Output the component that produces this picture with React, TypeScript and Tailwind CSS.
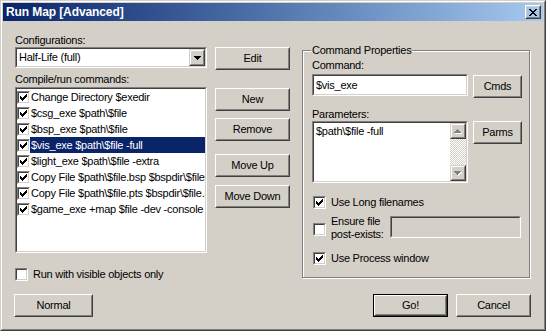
import type { ReactNode } from "react"

const FONT = "font-['Liberation_Sans',Arial,sans-serif]"

function Raised({ children, className = "", isDefault = false }: { children?: ReactNode; className?: string; isDefault?: boolean }) {
  const face = (
    <div className="flex h-full w-full border border-t-white border-l-white border-r-[#404040] border-b-[#404040]">
      <div className="flex flex-1 items-center justify-center border border-t-[#d4d0c8] border-l-[#d4d0c8] border-r-[#808080] border-b-[#808080]">
        {children}
      </div>
    </div>
  )
  if (isDefault) return <div className={`border border-black ${className}`}>{face}</div>
  return <div className={className}>{face}</div>
}

// scrollbar / combo arrow style button
function ArrowBox({ children, className = "" }: { children?: ReactNode; className?: string }) {
  return (
    <div className={`flex border border-t-[#d4d0c8] border-l-[#d4d0c8] border-r-[#404040] border-b-[#404040] ${className}`}>
      <div className="flex flex-1 items-center justify-center border border-t-white border-l-white border-r-[#808080] border-b-[#808080] bg-[#d4d0c8]">
        {children}
      </div>
    </div>
  )
}

function Sunken({ children, className = "", bg = "bg-white" }: { children?: ReactNode; className?: string; bg?: string }) {
  return (
    <div className={`flex border border-t-[#808080] border-l-[#808080] border-r-white border-b-white ${className}`}>
      <div className={`flex flex-1 min-w-0 border border-t-[#404040] border-l-[#404040] border-r-[#d4d0c8] border-b-[#d4d0c8] ${bg}`}>
        {children}
      </div>
    </div>
  )
}

function Check() {
  return (
    <svg width="7" height="7" viewBox="0 0 7 7" shapeRendering="crispEdges" className="m-[1px]">
      <path
        d="M6 0h1v1h-1z M5 1h2v1h-2z M0 2h1v1h-1z M4 2h3v1h-3z M0 3h2v1h-2z M3 3h3v1h-3z M0 4h5v1h-5z M1 5h3v1h-3z M2 6h1v1h-1z"
        fill="#000"
      />
    </svg>
  )
}

function CheckBox({ checked, className = "" }: { checked?: boolean; className?: string }) {
  return (
    <Sunken className={`h-[13px] w-[13px] shrink-0 ${className}`}>
      {checked && <Check />}
    </Sunken>
  )
}

function DownTri({ color = "#000" }: { color?: string }) {
  return (
    <svg width="7" height="4" viewBox="0 0 7 4" shapeRendering="crispEdges">
      <path d="M0 0h7v1h-7z M1 1h5v1h-5z M2 2h3v1h-3z M3 3h1v1h-1z" fill={color} />
    </svg>
  )
}

function GrayTri({ up }: { up?: boolean }) {
  const d = up
    ? "M3 0h1v1h-1z M2 1h3v1h-3z M1 2h5v1h-5z M0 3h7v1h-7z"
    : "M0 0h7v1h-7z M1 1h5v1h-5z M2 2h3v1h-3z M3 3h1v1h-1z"
  return (
    <svg width="8" height="5" viewBox="0 0 8 5" shapeRendering="crispEdges">
      <path d={d} fill="#fff" transform="translate(1 1)" />
      <path d={d} fill="#808080" />
    </svg>
  )
}

const commands = [
  "Change Directory $exedir",
  "$csg_exe $path\\$file",
  "$bsp_exe $path\\$file",
  "$vis_exe $path\\$file -full",
  "$light_exe $path\\$file -extra",
  "Copy File $path\\$file.bsp $bspdir\\$file.bsp",
  "Copy File $path\\$file.pts $bspdir\\$file.pts",
  "$game_exe +map $file -dev -console",
]

export default function App() {
  return (
    <div className={`${FONT} text-[11px] leading-[13px] tracking-[-0.25px] text-black`}>
      <div className="h-[331px] w-[546px] border border-t-[#d4d0c8] border-l-[#d4d0c8] border-r-[#404040] border-b-[#404040] bg-[#d4d0c8]">
        <div className="flex h-full w-full flex-col border border-t-white border-l-white border-r-[#808080] border-b-[#808080] p-[1px]">
          {/* title bar */}
          <div className="flex h-[18px] shrink-0 items-center bg-gradient-to-r from-[#0a246a] to-[#a6caf0] pl-[3px] pr-[2px]">
            <span className="flex-1 text-[12px] font-bold tracking-[-0.1px] text-white">Run Map [Advanced]</span>
            <Raised className="h-[14px] w-[16px]">
              <svg width="8" height="7" viewBox="0 0 8 7" shapeRendering="crispEdges">
                <path
                  d="M0 0h2v1h-2z M6 0h2v1h-2z M1 1h2v1h-2z M5 1h2v1h-2z M2 2h4v1h-4z M3 3h2v1h-2z M2 4h4v1h-4z M1 5h2v1h-2z M5 5h2v1h-2z M0 6h2v1h-2z M6 6h2v1h-2z"
                  fill="#000"
                />
              </svg>
            </Raised>
          </div>

          {/* body */}
          <div className="flex items-start">
            {/* left column */}
            <div className="ml-[12px] mt-[13px] flex w-[275px] flex-col">
              <div className="h-[13px]">Configurations:</div>
              <div className="flex h-[23px] items-start">
                <Sunken className="h-[21px] w-[192px]">
                  <div className="flex flex-1 items-center pl-[2px]">Half-Life (full)</div>
                  <ArrowBox className="h-[17px] w-[16px]">
                    <DownTri />
                  </ArrowBox>
                </Sunken>
                <Raised className="ml-[8px] h-[23px] w-[75px]">Edit</Raised>
              </div>
              <div className="mt-[3px] h-[13px]">Compile/run commands:</div>
              <div className="mt-[1px] flex items-start">
                <Sunken className="h-[166px] w-[192px]">
                  <div className="flex min-w-0 flex-1 flex-col">
                    {commands.map((c, i) => (
                      <div key={c} className="flex h-[16px] items-center">
                        <CheckBox checked />
                        <div
                          className={`flex h-full min-w-0 flex-1 items-center overflow-hidden whitespace-nowrap pl-[1px] ${
                            i === 3 ? "bg-[#0a246a] text-white" : ""
                          }`}
                        >
                          {c}
                        </div>
                      </div>
                    ))}
                  </div>
                </Sunken>
                <div className="ml-[8px] flex w-[75px] flex-col">
                  <Raised className="mt-[1px] h-[23px]">New</Raised>
                  <Raised className="mt-[7px] h-[23px]">Remove</Raised>
                  <Raised className="mt-[13px] h-[23px]">Move Up</Raised>
                  <Raised className="mt-[8px] h-[23px]">Move Down</Raised>
                </div>
              </div>
              <div className="mt-[15px] flex h-[13px] items-center">
                <CheckBox />
                <span className="ml-[5px]">Run with visible objects only</span>
              </div>
            </div>

            {/* right group box */}
            <div className="relative ml-[12px] mt-[29px] flex h-[228px] w-[228px] flex-col border border-[#808080] pl-[9px] pt-[8px] shadow-[inset_1px_1px_0_#fff,1px_1px_0_#fff]">
              <span className="absolute left-[8px] top-[-7px] bg-[#d4d0c8] px-[1px]">Command Properties</span>
              <div className="h-[13px]">Command:</div>
              <div className="mt-[2px] flex h-[23px] items-start">
                <Sunken className="h-[22px] w-[156px]">
                  <div className="flex flex-1 items-center pl-[2px]">$vis_exe</div>
                </Sunken>
                <Raised className="ml-[5px] mt-[1px] h-[23px] w-[49px]">Cmds</Raised>
              </div>
              <div className="mt-[11px] h-[13px]">Parameters:</div>
              <div className="flex items-start">
                <Sunken className="h-[62px] w-[156px]">
                  <div className="flex-1 pl-[2px] pt-[2px]">$path\$file -full</div>
                  <div className="flex w-[16px] flex-col">
                    <ArrowBox className="h-[16px]">
                      <GrayTri up />
                    </ArrowBox>
                    <div className="flex-1 bg-[repeating-conic-gradient(#ffffff_0%_25%,#d4d0c8_0%_50%)] bg-[length:2px_2px]" />
                    <ArrowBox className="h-[16px]">
                      <GrayTri />
                    </ArrowBox>
                  </div>
                </Sunken>
                <Raised className="ml-[5px] h-[23px] w-[49px]">Parms</Raised>
              </div>
              <div className="ml-[1px] mt-[13px] flex h-[13px] items-center">
                <CheckBox checked />
                <span className="ml-[5px]">Use Long filenames</span>
              </div>
              <div className="ml-[1px] mt-[6px] flex h-[26px] items-start">
                <CheckBox className="mt-[8px]" />
                <span className="ml-[5px] w-[59px]">
                  Ensure file
                  <br />
                  post-exists:
                </span>
                <Sunken className="mt-[1px] h-[22px] w-[131px]" bg="bg-[#d4d0c8]" />
              </div>
              <div className="ml-[1px] mt-[11px] flex h-[13px] items-center">
                <CheckBox checked />
                <span className="ml-[5px]">Use Process window</span>
              </div>
            </div>
          </div>

          {/* bottom buttons */}
          <div className="mt-[13px] flex">
            <Raised className="ml-[11px] h-[23px] w-[79px]">Normal</Raised>
            <div className="flex-1" />
            <Raised isDefault className="h-[23px] w-[75px]">
              Go!
            </Raised>
            <Raised className="ml-[8px] mr-[12px] h-[23px] w-[75px]">Cancel</Raised>
          </div>
        </div>
      </div>
    </div>
  )
}
